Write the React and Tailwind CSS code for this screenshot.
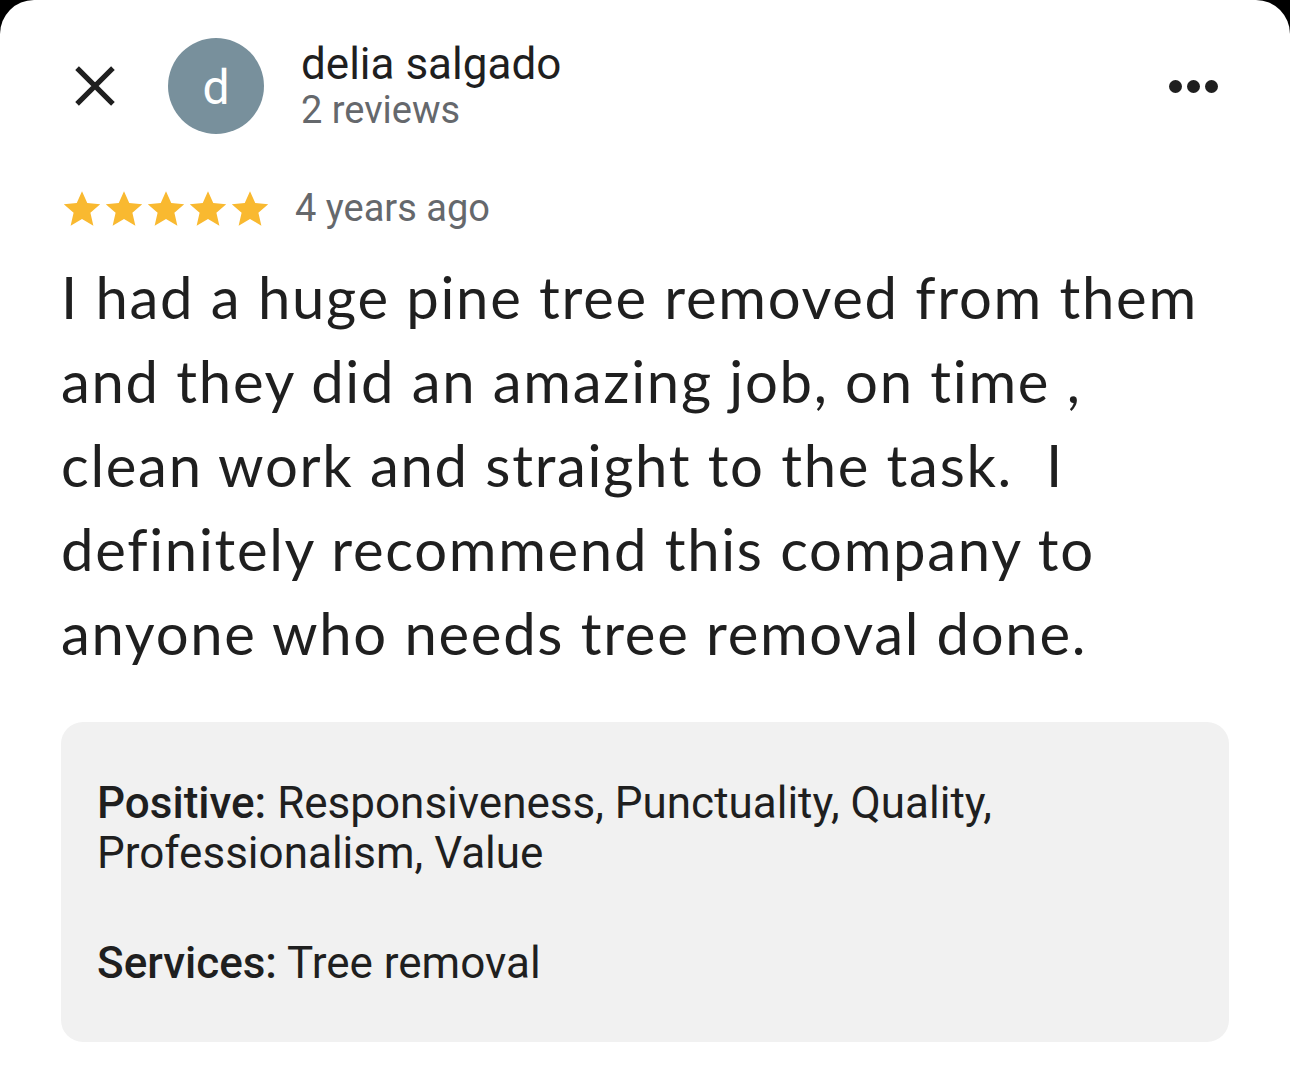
import React from 'react';

const Star = () => (
  <svg viewBox="0 0 24 24" className="w-[42px] h-[42px]" fill="#f9b930">
    <path d="M12 1.8l3 6.8 7.4.7-5.6 4.9 1.7 7.3L12 17.7l-6.5 3.8 1.7-7.3-5.6-4.9 7.4-.7z" />
  </svg>
);

const App = () => {
  return (
    <div className="w-[1290px] h-[1087px] bg-black overflow-hidden">
      <div className="w-full h-full bg-white rounded-t-[34px] font-['Roboto',sans-serif] text-[#1f1f1f]">
        {/* header */}
        <div className="flex items-center pt-[38px] pl-[72px] pr-[72px]">
          <svg viewBox="0 0 40 40" className="w-[46px] h-[46px] shrink-0" stroke="#1f1f1f" strokeWidth="4.5" strokeLinecap="square">
            <path d="M6 6L34 34M34 6L6 34" />
          </svg>
          <div className="ml-[50px] w-[96px] h-[96px] rounded-full bg-[#78909c] flex items-center justify-center text-white text-[48px] leading-none pt-1 shrink-0">
            d
          </div>
          <div className="ml-[37px] flex flex-col">
            <span className="text-[44px] leading-[48px]">delia salgado</span>
            <span className="text-[38px] leading-[44px] text-[#65686c]">2 reviews</span>
          </div>
          <div className="ml-auto flex gap-[5px]">
            <span className="w-[13px] h-[13px] rounded-full bg-[#1f1f1f]" />
            <span className="w-[13px] h-[13px] rounded-full bg-[#1f1f1f]" />
            <span className="w-[13px] h-[13px] rounded-full bg-[#1f1f1f]" />
          </div>
        </div>

        {/* rating */}
        <div className="flex items-center mt-[46px] pl-[61px]">
          <div className="flex">
            <Star /><Star /><Star /><Star /><Star />
          </div>
          <span className="ml-[24px] text-[38px] text-[#65686c]">4 years ago</span>
        </div>

        {/* body */}
        <p className="mt-[18px] pl-[61px] pr-[40px] font-['Lato',sans-serif] text-[58px] leading-[84px] tracking-[1.7px] text-[#1f1f1f]">
          I had a huge pine tree removed from them<br />
          and they did an amazing job, on time ,<br />
          clean work and straight to the task.&nbsp; I<br />
          definitely recommend this company to<br />
          anyone who needs tree removal done.
        </p>

        {/* attributes */}
        <div className="mt-[47px] mx-[61px] bg-[#f1f1f1] rounded-[22px] px-[36px] pt-[56px] pb-[54px] text-[44px] leading-[50px] text-[#1f1f1f]">
          <p>
            <span className="font-medium">Positive:</span> Responsiveness, Punctuality, Quality,<br />
            Professionalism, Value
          </p>
          <p className="mt-[60px]">
            <span className="font-medium">Services:</span> Tree removal
          </p>
        </div>
      </div>
    </div>
  );
};

export default App;
